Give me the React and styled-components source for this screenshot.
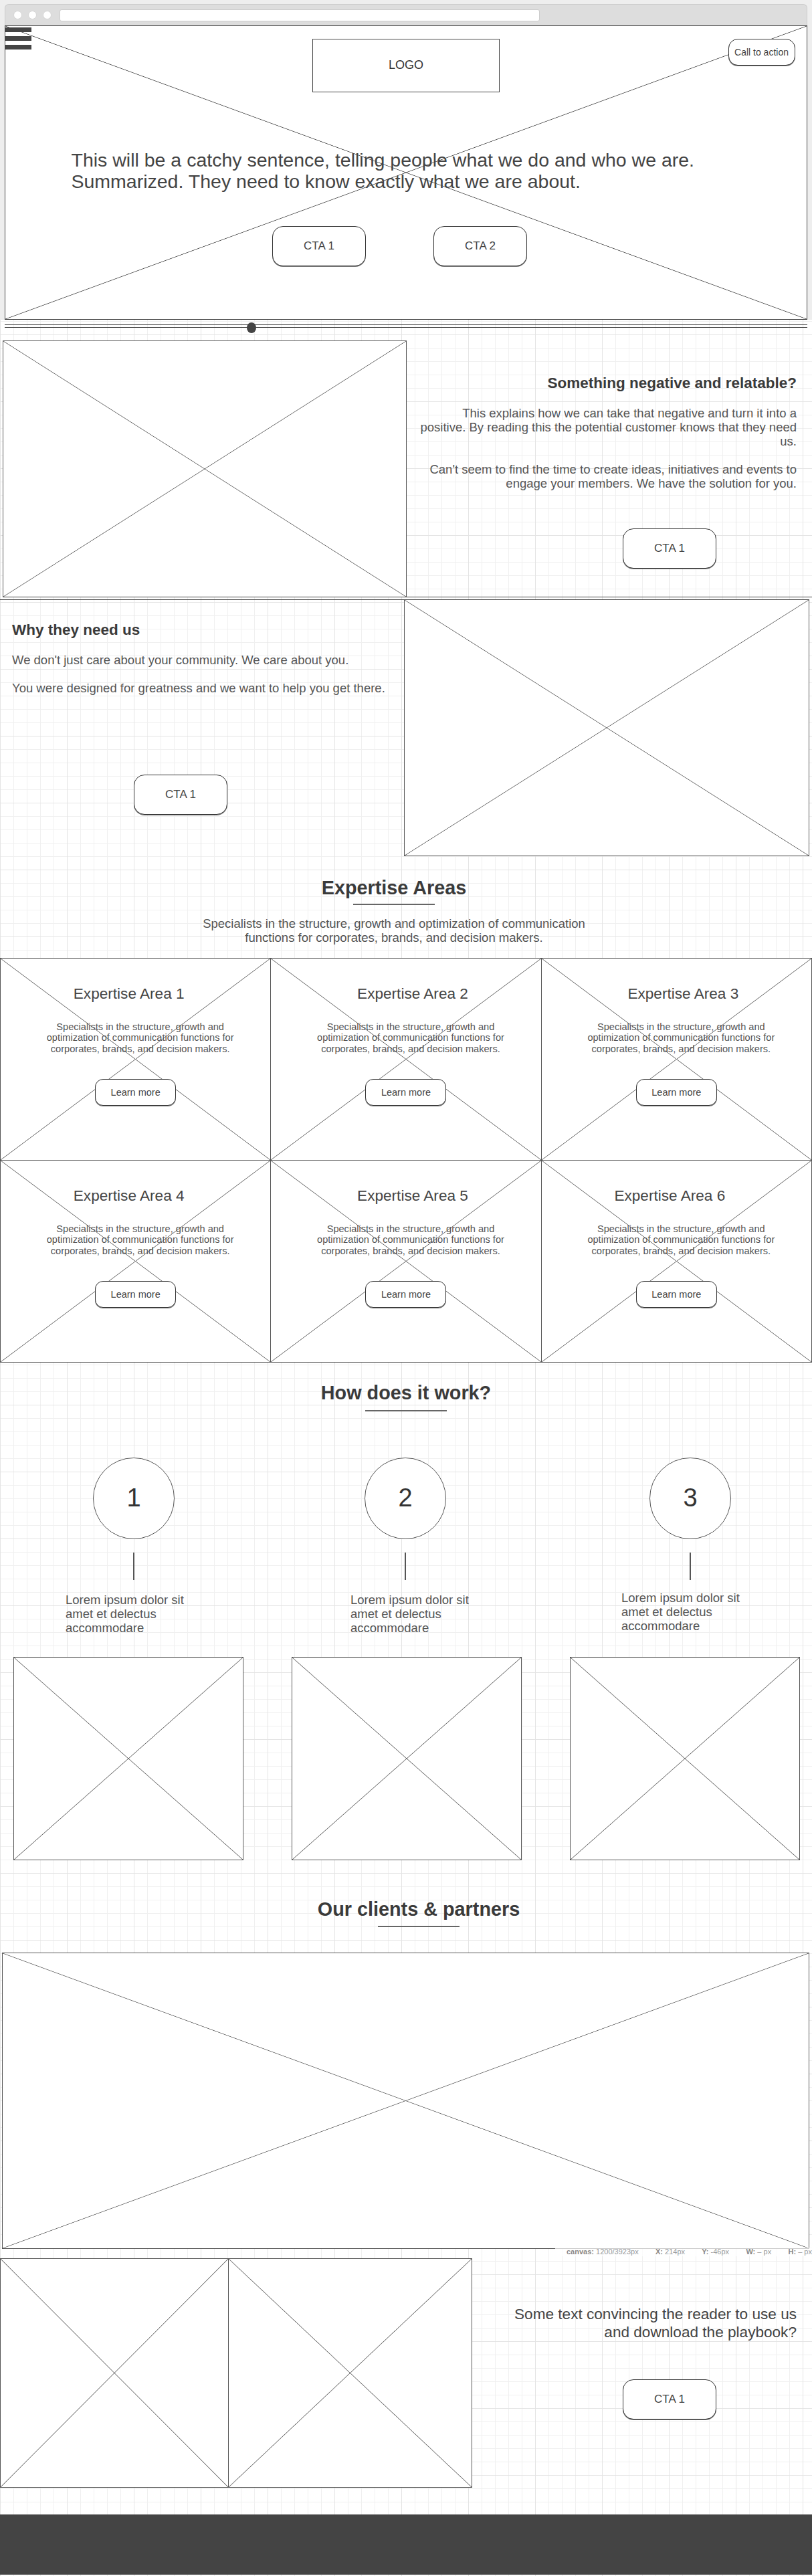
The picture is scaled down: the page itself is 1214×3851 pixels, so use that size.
import React from "react"
import styled, { createGlobalStyle } from "styled-components"

const GlobalStyle = createGlobalStyle`
    html, body {
        margin: 0;
        padding: 0;
    }
    body {
        font-family: "Liberation Sans", Arial, sans-serif;
        color: #444;
        background: #fff;
    }
    * {
        box-sizing: border-box;
    }
`

const gridPaper = `
    background-color: #fff;
    background-image:
        linear-gradient(#e4e4e4 1px, transparent 1px),
        linear-gradient(90deg, #e4e4e4 1px, transparent 1px),
        linear-gradient(#f0f0f0 1px, transparent 1px),
        linear-gradient(90deg, #f0f0f0 1px, transparent 1px);
    background-size: 100px 100px, 100px 100px, 20px 20px, 20px 20px;
`

// the wireframe "image placeholder" cross, drawn with two diagonal gradients
const crossed = (color) => `
    background-color: #fff;
    background-image:
        linear-gradient(to top right, transparent calc(50% - 0.8px), ${color} 50%, transparent calc(50% + 0.8px)),
        linear-gradient(to bottom right, transparent calc(50% - 0.8px), ${color} 50%, transparent calc(50% + 0.8px));
`

const Page = styled.div`
    ${gridPaper}
    width: 1214px;
    min-height: 3851px;
    display: flex;
    flex-direction: column;
`

/* ---------- browser + hero ---------- */

const TopArea = styled.div`
    background: #eee;
    padding: 6px 7px 0;
`

const BrowserBar = styled.div`
    height: 32px;
    background: #ddd;
    border: 1px solid #ccc;
    border-bottom: none;
    border-radius: 6px 6px 0 0;
    display: flex;
    align-items: center;
    gap: 9px;
    padding-left: 12px;
`

const Dot = styled.span`
    width: 13px;
    height: 13px;
    border-radius: 50%;
    background: #fff;
    border: 1px solid #d4d4d4;
`

const AddressBar = styled.div`
    width: 718px;
    height: 18px;
    margin-left: 3px;
    background: #fff;
    border: 1px solid #ccc;
    border-radius: 3px;
`

const Hero = styled.section`
    ${crossed("#4a4a4a")}
    height: 440px;
    border: 1.5px solid #444;
    display: flex;
    flex-direction: column;
`

const HeroHeader = styled.div`
    display: grid;
    grid-template-columns: 1fr 280px 1fr;
    align-items: start;
`

const Hamburger = styled.div`
    display: flex;
    flex-direction: column;
    gap: 6px;
    margin: 1.5px 0 0 -1.5px;

    span {
        width: 40px;
        height: 7px;
        background: #444;
    }
`

const LogoBox = styled.div`
    margin-top: 18.5px;
    height: 80px;
    border: 1.5px solid #444;
    background: #fff;
    display: flex;
    align-items: center;
    justify-content: center;
    font-size: 18px;
    color: #333;
`

const Button = styled.button`
    font-family: "Liberation Sans", Arial, sans-serif;
    width: ${(p) => (p.$size === "lg" ? "140px" : p.$size === "md" ? "121px" : "100px")};
    height: ${(p) => (p.$size === "lg" ? "60px" : "40px")};
    font-size: ${(p) => (p.$size === "lg" ? "17px" : p.$size === "md" ? "14.5px" : "14px")};
    border-radius: ${(p) => (p.$size === "lg" ? "16px" : p.$size === "md" ? "12px" : "14px")};
    border: 1.5px solid #333;
    box-shadow: 0 1px 0 #777;
    background: #fff;
    color: #444;
    padding: 0;
    flex-shrink: 0;
    cursor: pointer;
`

const CornerButton = styled(Button)`
    justify-self: end;
    margin: 18.5px 17.5px 0 0;
`

const HeroText = styled.p`
    margin: 85px 0 0;
    padding-left: 98.5px;
    font-size: 28.5px;
    line-height: 32px;
    color: #444;
`

const HeroActions = styled.div`
    display: flex;
    justify-content: center;
    gap: 101px;
    margin-top: 51px;
    padding-right: 19px;
`

const SliderBand = styled.div`
    height: 25px;
    padding: 7px 7px 0;
`

const SliderTrack = styled.div`
    position: relative;
    height: 5px;
    border-top: 1.5px solid #444;
    border-bottom: 1.5px solid #444;
`

const SliderKnob = styled.span`
    position: absolute;
    left: 362px;
    top: -4px;
    width: 14px;
    height: 16px;
    border-radius: 50%;
    background: #444;
`

/* ---------- split sections ---------- */

const SplitSection = styled.section`
    display: grid;
    grid-template-columns: ${(p) => p.$cols};
    margin: ${(p) => p.$margin};
    ${(p) => (p.$edge === "bottom" ? "border-bottom" : "border-top")}: 1.5px solid #444;
`

const ImageBox = styled.div`
    ${crossed("#666")}
    height: ${(p) => p.$h}px;
    border: 1.5px solid #555;
    ${(p) => (p.$open ? `border-${p.$open}: none;` : "")}
`

const TextColumn = styled.div`
    display: flex;
    flex-direction: column;
    align-items: ${(p) => (p.$right ? "flex-end" : "flex-start")};
    text-align: ${(p) => (p.$right ? "right" : "left")};
    padding: ${(p) => p.$pad};
`

const BlockTitle = styled.h3`
    margin: 0;
    font-size: 22.5px;
    line-height: 26px;
    font-weight: 700;
    color: #3a3a3a;
`

const Copy = styled.p`
    margin: ${(p) => p.$gap || 0}px 0 0;
    font-size: 18.5px;
    line-height: 21px;
    color: #555;
`

const ColumnButton = styled(Button)`
    margin-top: ${(p) => p.$top}px;
    ${(p) => (p.$right ? `margin-right: ${p.$right}px;` : "")}
    ${(p) => (p.$left ? `margin-left: ${p.$left}px;` : "")}
`

/* ---------- centered sections ---------- */

const CenteredHeader = styled.div`
    display: flex;
    flex-direction: column;
    align-items: center;
    padding: ${(p) => p.$pad};
`

const SectionTitle = styled.h2`
    margin: 0;
    font-size: 28.8px;
    line-height: 34px;
    font-weight: 700;
    color: #3a3a3a;
`

const TitleRule = styled.div`
    width: 122px;
    height: 2px;
    background: #666;
    margin-top: ${(p) => p.$top || 8}px;
`

const Lead = styled.p`
    margin: 17px 0 0;
    max-width: 610px;
    text-align: center;
    font-size: 18.5px;
    line-height: 21px;
    color: #555;
`

const AreaGrid = styled.div`
    display: grid;
    grid-template-columns: repeat(3, 1fr);
    border-top: 1.5px solid #555;
    border-left: 1.5px solid #555;
    margin-top: 20px;
`

const AreaCell = styled.div`
    ${crossed("#666")}
    height: 302px;
    border-right: 1.5px solid #555;
    border-bottom: 1.5px solid #555;
    display: flex;
    flex-direction: column;
    align-items: center;
    padding-top: 40px;
`

const AreaTitle = styled.h4`
    margin: 0 0 0 ${(p) => p.$shift * 2}px;
    font-size: 22.6px;
    line-height: 26px;
    font-weight: 400;
    color: #444;
`

const AreaText = styled.p`
    margin: 28px 0 0 14px;
    max-width: 300px;
    text-align: center;
    font-size: 14.6px;
    line-height: 16.5px;
    color: #555;
`

const AreaButton = styled(Button)`
    margin-top: 37px;
`

const Steps = styled.div`
    display: grid;
    grid-template-columns: repeat(3, 344px);
    column-gap: 72px;
    padding-left: 20px;
    margin-top: 69px;
`

const Step = styled.div`
    display: flex;
    flex-direction: column;
    align-items: center;
`

const StepCircle = styled.div`
    width: 122px;
    height: 122px;
    margin-left: ${(p) => p.$shift * 2}px;
    border-radius: 50%;
    border: 1.5px solid #555;
    background: #fff;
    display: flex;
    align-items: center;
    justify-content: center;
    font-size: 38px;
    color: #333;
`

const StepLine = styled.div`
    width: 1.5px;
    height: 41px;
    margin: 20px 0 0 ${(p) => p.$shift * 2}px;
    background: #555;
`

const StepText = styled.p`
    align-self: flex-start;
    margin: ${(p) => p.$top}px 0 0 ${(p) => p.$indent}px;
    width: 190px;
    font-size: 18.5px;
    line-height: 21px;
    color: #555;
`

const StepImage = styled.div`
    ${crossed("#666")}
    align-self: stretch;
    height: 304px;
    margin-top: ${(p) => p.$top}px;
    border: 1.5px solid #555;
`

const ClientsFrame = styled.div`
    position: relative;
    margin: 38px 4px 0 3px;
`

const StatusBar = styled.div`
    position: absolute;
    right: -4px;
    bottom: -11px;
    width: 384px;
    height: 13px;
    display: flex;
    justify-content: space-between;
    padding-left: 17px;
    background: rgba(255, 255, 255, 0.7);
    font-size: 11px;
    line-height: 13px;
    color: #999;

    b {
        color: #888;
    }
`

const ClosingSection = styled.section`
    display: grid;
    grid-template-columns: 342px 364px 1fr;
    margin-top: 14px;
`

const ClosingText = styled.p`
    margin: 0;
    max-width: 445px;
    font-size: 22.6px;
    line-height: 27px;
    color: #444;
`

const Footer = styled.footer`
    height: 90px;
    margin-top: 40px;
    background: #444;
`

const areas = [
    { n: 1, shift: -10 },
    { n: 2, shift: 10 },
    { n: 3, shift: 10 },
    { n: 4, shift: -10 },
    { n: 5, shift: 10 },
    { n: 6, shift: -10 },
]

const steps = [
    { n: 1, shift: 8, indent: 78, top: 19 },
    { n: 2, shift: -2, indent: 88, top: 19 },
    { n: 3, shift: 8, indent: 77, top: 16 },
]

const areaText = "Specialists in the structure, growth and optimization of communication functions for corporates, brands, and decision makers."

const App = () => {
    return (
        <Page>
            <GlobalStyle />
            <TopArea>
                <BrowserBar>
                    <Dot />
                    <Dot />
                    <Dot />
                    <AddressBar />
                </BrowserBar>
                <Hero>
                    <HeroHeader>
                        <Hamburger>
                            <span />
                            <span />
                            <span />
                        </Hamburger>
                        <LogoBox>LOGO</LogoBox>
                        <CornerButton>Call to action</CornerButton>
                    </HeroHeader>
                    <HeroText>
                        This will be a catchy sentence, telling people what we do and who we are.
                        <br />
                        Summarized. They need to know exactly what we are about.
                    </HeroText>
                    <HeroActions>
                        <Button $size="lg">CTA 1</Button>
                        <Button $size="lg">CTA 2</Button>
                    </HeroActions>
                </Hero>
            </TopArea>

            <SliderBand>
                <SliderTrack>
                    <SliderKnob />
                </SliderTrack>
            </SliderBand>

            <SplitSection $cols="604px 1fr" $margin="6px 0 0 4px" $edge="bottom">
                <ImageBox $h={383} $open="bottom" />
                <TextColumn $right $pad="51px 23px 0 13px">
                    <BlockTitle>Something negative and relatable?</BlockTitle>
                    <Copy $gap={21}>
                        This explains how we can take that negative and turn it into a positive. By reading this the potential customer knows that they need us.
                    </Copy>
                    <Copy $gap={21}>
                        Can't seem to find the time to create ideas, initiatives and events to engage your members. We have the solution for you.
                    </Copy>
                    <ColumnButton $size="lg" $top={57} $right={120}>CTA 1</ColumnButton>
                </TextColumn>
            </SplitSection>

            <SplitSection $cols="1fr 606px" $margin="2.5px 4px 0 0" $edge="top">
                <TextColumn $pad="32px 0 0 18px">
                    <BlockTitle>Why they need us</BlockTitle>
                    <Copy $gap={21}>We don't just care about your community. We care about you.</Copy>
                    <Copy $gap={21}>You were designed for greatness and we want to help you get there.</Copy>
                    <ColumnButton $size="lg" $top={119} $left={182}>CTA 1</ColumnButton>
                </TextColumn>
                <ImageBox $h={383} $open="top" />
            </SplitSection>

            <CenteredHeader $pad="30px 36px 0 0">
                <SectionTitle>Expertise Areas</SectionTitle>
                <TitleRule $top={7} />
                <Lead>Specialists in the structure, growth and optimization of communication functions for corporates, brands, and decision makers.</Lead>
            </CenteredHeader>
            <AreaGrid>
                {areas.map((area) => (
                    <AreaCell key={area.n}>
                        <AreaTitle $shift={area.shift}>Expertise Area {area.n}</AreaTitle>
                        <AreaText>{areaText}</AreaText>
                        <AreaButton $size="md">Learn more</AreaButton>
                    </AreaCell>
                ))}
            </AreaGrid>

            <CenteredHeader $pad="28px 0 0 0">
                <SectionTitle>How does it work?</SectionTitle>
                <TitleRule $top={9} />
            </CenteredHeader>
            <Steps>
                {steps.map((step) => (
                    <Step key={step.n}>
                        <StepCircle $shift={step.shift}>{step.n}</StepCircle>
                        <StepLine $shift={step.shift} />
                        <StepText $indent={step.indent} $top={step.top}>
                            Lorem ipsum dolor sit amet et delectus accommodare
                        </StepText>
                        <StepImage $top={52 - step.top} />
                    </Step>
                ))}
            </Steps>

            <CenteredHeader $pad="56px 0 0 38px">
                <SectionTitle>Our clients &amp; partners</SectionTitle>
                <TitleRule />
            </CenteredHeader>
            <ClientsFrame>
                <ImageBox $h={443} />
                <StatusBar>
                    <span><b>canvas:</b> 1200/3923px</span>
                    <span><b>X:</b> 214px</span>
                    <span><b>Y:</b> -46px</span>
                    <span><b>W:</b> – px</span>
                    <span><b>H:</b> – px</span>
                </StatusBar>
            </ClientsFrame>

            <ClosingSection>
                <ImageBox $h={343} />
                <ImageBox $h={343} $open="left" />
                <TextColumn $right $pad="70px 23px 0 0">
                    <ClosingText>Some text convincing the reader to use us and download the playbook?</ClosingText>
                    <ColumnButton $size="lg" $top={57} $right={120}>CTA 1</ColumnButton>
                </TextColumn>
            </ClosingSection>

            <Footer />
        </Page>
    )
}

export default App
